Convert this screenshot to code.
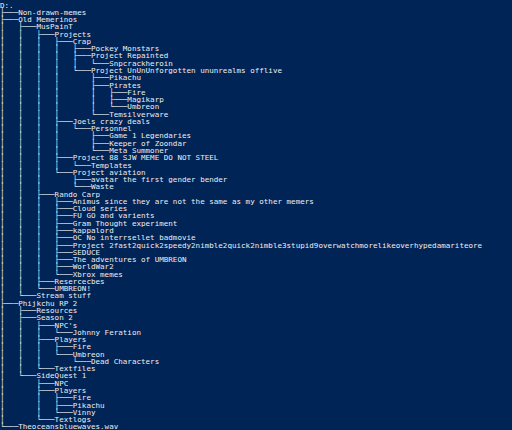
const lines = [
  "Volume serial number is 0E2A-4B1C",
  "D:.",
  "├───Non-drawn-memes",
  "├───Old Memerinos",
  "│   ├───MusPainT",
  "│   │   ├───Projects",
  "│   │   │   ├───Crap",
  "│   │   │   │   ├───Pockey Monstars",
  "│   │   │   │   ├───Project Repainted",
  "│   │   │   │   │   └───Snpcrackheroin",
  "│   │   │   │   └───Project UnUnUnforgotten ununrealms offlive",
  "│   │   │   │       ├───Pikachu",
  "│   │   │   │       ├───Pirates",
  "│   │   │   │       │   ├───Fire",
  "│   │   │   │       │   ├───Magikarp",
  "│   │   │   │       │   └───Umbreon",
  "│   │   │   │       └───Temsilverware",
  "│   │   │   ├───Joels crazy deals",
  "│   │   │   │   └───Personnel",
  "│   │   │   │       ├───Game 1 Legendaries",
  "│   │   │   │       ├───Keeper of Zoondar",
  "│   │   │   │       └───Meta Summoner",
  "│   │   │   ├───Project 88 SJW MEME DO NOT STEEL",
  "│   │   │   │   └───Templates",
  "│   │   │   └───Project aviation",
  "│   │   │       ├───avatar the first gender bender",
  "│   │   │       └───Waste",
  "│   │   ├───Rando Carp",
  "│   │   │   ├───Animus since they are not the same as my other memers",
  "│   │   │   ├───Cloud series",
  "│   │   │   ├───FU GO and varients",
  "│   │   │   ├───Gram Thought experiment",
  "│   │   │   ├───kappalord",
  "│   │   │   ├───OC No interrsellet badmovie",
  "│   │   │   ├───Project 2fast2quick2speedy2nimble2quick2nimble3stupid9overwatchmorelikeoverhypedamariteore",
  "│   │   │   ├───SEDUCE",
  "│   │   │   ├───The adventures of UMBREON",
  "│   │   │   ├───WorldWar2",
  "│   │   │   └───Xbrox memes",
  "│   │   ├───Resercecbes",
  "│   │   └───UMBREON!",
  "│   └───Stream stuff",
  "├───Phijkchu RP 2",
  "│   ├───Resources",
  "│   ├───Season 2",
  "│   │   ├───NPC's",
  "│   │   │   └───Johnny Feration",
  "│   │   ├───Players",
  "│   │   │   ├───Fire",
  "│   │   │   └───Umbreon",
  "│   │   │       └───Dead Characters",
  "│   │   └───Textfiles",
  "│   └───SideQuest 1",
  "│       ├───NPC",
  "│       ├───Players",
  "│       │   ├───Fire",
  "│       │   ├───Pikachu",
  "│       │   └───Vinny",
  "│       └───Textlogs",
  "└───Theoceansbluewaves.wav",
];

const App = () => {
  return (
    <div className="h-screen w-full overflow-hidden bg-[#012456]">
      <div className="-mt-[5.7px] w-[1024px] origin-top-left scale-50">
        <pre className="font-['DejaVu_Sans_Mono',monospace] text-[15.12px] leading-[14.552px] text-[#eeedf0] whitespace-pre">
          {lines.join("\n")}
        </pre>
      </div>
    </div>
  );
};

export default App;
